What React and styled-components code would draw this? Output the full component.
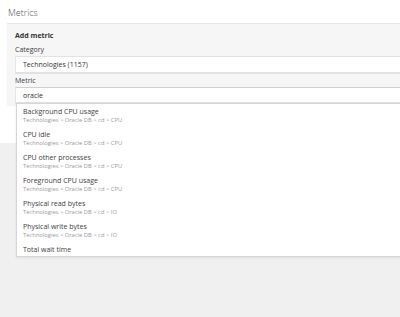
import React from "react";
import styled, { createGlobalStyle } from "styled-components";

const GlobalStyle = createGlobalStyle`
  html, body {
    margin: 0;
    padding: 0;
    background: #ffffff;
  }
  body {
    font-family: "Open Sans", "Noto Sans", sans-serif;
    overflow: hidden;
  }
`;

const Page = styled.div`
  position: relative;
  width: 400px;
  height: 317px;
  display: flex;
  flex-direction: column;
  overflow: hidden;
`;

const Header = styled.div`
  height: 23px;
  padding: 1px 0 0 8px;
  box-sizing: border-box;
  display: flex;
  align-items: center;
  font-size: 9px;
  font-weight: 300;
  color: #555555;
`;

const Panel = styled.div`
  margin-left: 7px;
  background: #f6f6f6;
  border-top: 1px solid #e8e8e8;
  padding: 5px 0 2px 8px;
  display: flex;
  flex-direction: column;
`;

const PanelTitle = styled.div`
  font-size: 7px;
  font-weight: 700;
  line-height: 13px;
  color: #333333;
`;

const Label = styled.div`
  font-size: 7px;
  line-height: ${p => p.h}px;
  padding-top: ${p => p.pt || 0}px;
  color: #404040;
`;

const Field = styled.div`
  height: ${p => p.h}px;
  background: #ffffff;
  border-top: 1px solid ${p => p.top};
  border-bottom: 2px solid #e2e2e2;
  border-left: 1px solid #e6e6e6;
  padding-left: 7px;
  display: flex;
  align-items: center;
  font-size: 7px;
  color: #333333;
`;

const Spacer = styled.div`
  height: 37px;
  background: #ffffff;
`;

const Footer = styled.div`
  flex: 1;
  background: #f0f0f0;
`;

const Dropdown = styled.div`
  position: absolute;
  left: 16px;
  top: 103px;
  width: 400px;
  height: 152px;
  background: #ffffff;
  border: 1px solid #d6d6d6;
  box-shadow: 0 1px 2px rgba(0, 0, 0, 0.08);
  overflow: hidden;
`;

const Item = styled.div`
  height: 23px;
  padding: 3px 0 0 6px;
  box-sizing: border-box;
`;

const ItemTitle = styled.div`
  font-size: 7px;
  line-height: 10px;
  color: #404040;
`;

const ItemPath = styled.div`
  font-size: 5.8px;
  line-height: 7px;
  color: #999999;
`;

const items = [
  ["Background CPU usage", "CPU"],
  ["CPU idle", "CPU"],
  ["CPU other processes", "CPU"],
  ["Foreground CPU usage", "CPU"],
  ["Physical read bytes", "IO"],
  ["Physical write bytes", "IO"],
  ["Total wait time", null],
];

export default function App() {
  return (
    <>
      <GlobalStyle />
      <Page>
        <Header>Metrics</Header>
        <Panel>
          <PanelTitle>Add metric</PanelTitle>
          <Label h={13} pt={1}>Category</Label>
          <Field h={15} top="#e2e2e2">Technologies (1157)</Field>
          <Label h={12} pt={1}>Metric</Label>
          <Field h={14} top="#d0d0d0">oracle</Field>
        </Panel>
        <Spacer />
        <Footer />
        <Dropdown>
          {items.map(([name, group]) => (
            <Item key={name}>
              <ItemTitle>{name}</ItemTitle>
              {group && (
                <ItemPath>Technologies &gt; Oracle DB &gt; cd &gt; {group}</ItemPath>
              )}
            </Item>
          ))}
        </Dropdown>
      </Page>
    </>
  );
}
